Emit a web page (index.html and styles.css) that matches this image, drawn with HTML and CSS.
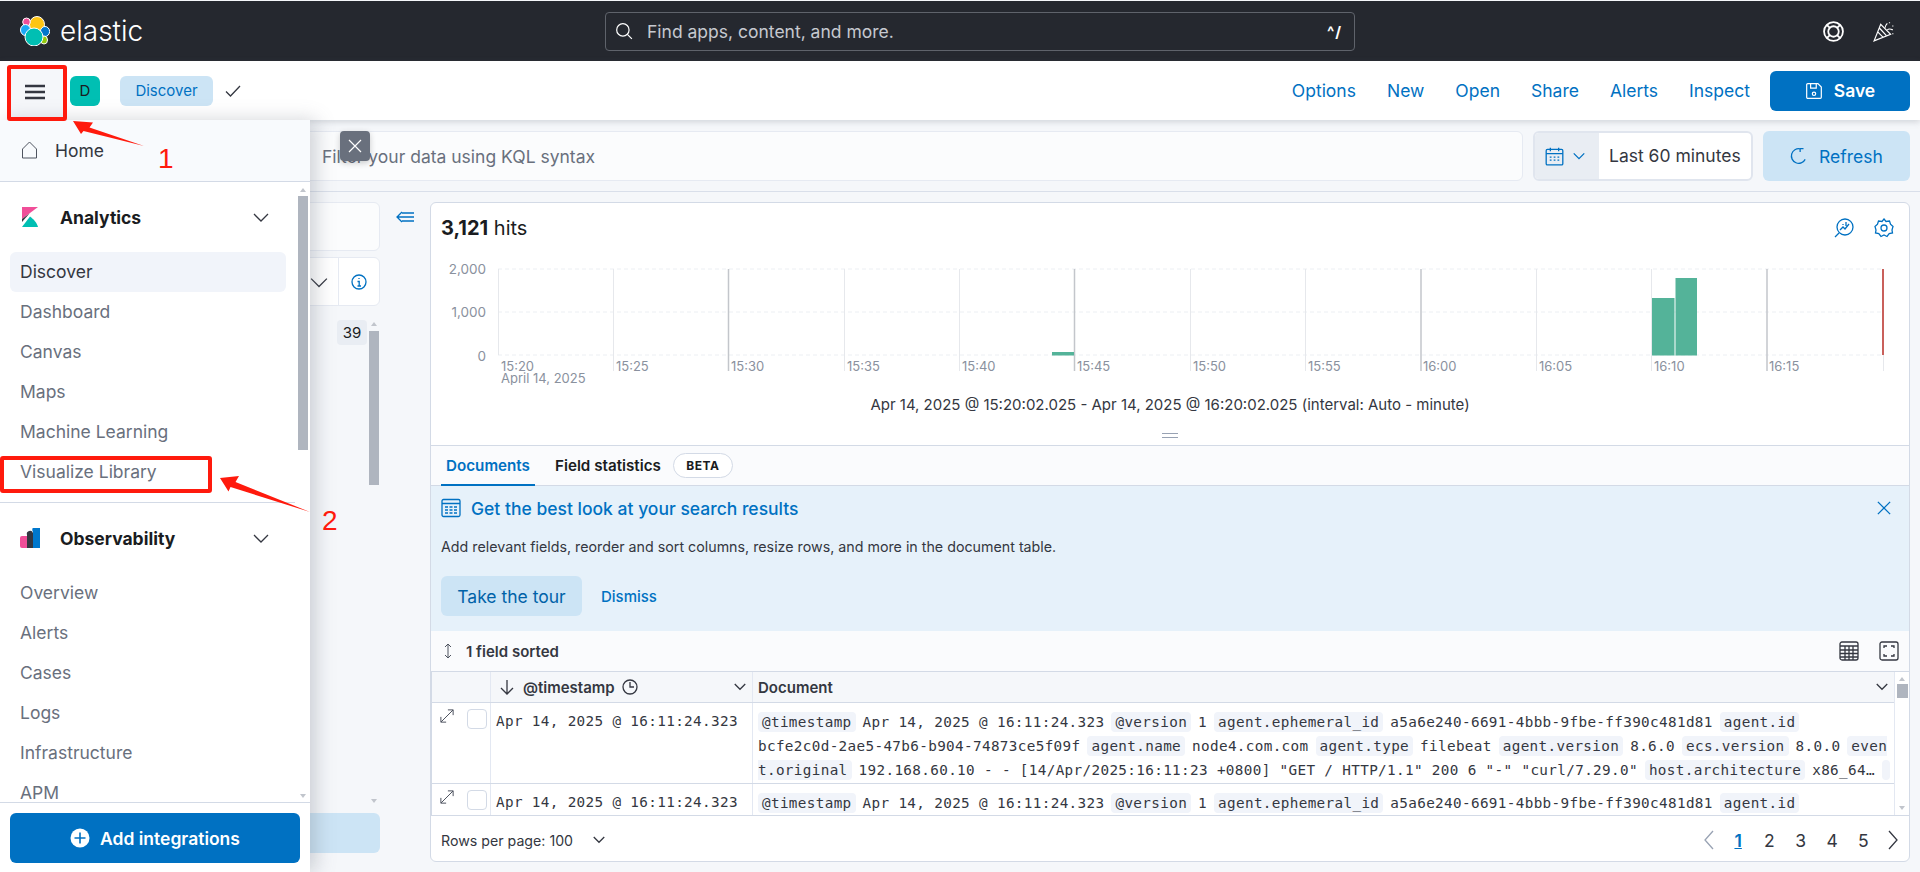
FILE: index.html
```html
<!DOCTYPE html>
<html lang="en">
<head>
<meta charset="utf-8">
<title>Discover - Elastic</title>
<link rel="stylesheet" href="styles.css">
</head>
<body>
<header class="topbar">
  <div class="brand">
    <svg class="brand-logo" viewBox="0 0 30 30" width="30" height="30">
      <ellipse cx="17" cy="8.5" rx="7.5" ry="8" fill="#fec514" stroke="#fff" stroke-width="1"/>
      <ellipse cx="6.5" cy="6" rx="3.8" ry="4" fill="#f04e98" stroke="#fff" stroke-width="1"/>
      <ellipse cx="5.5" cy="14" rx="5" ry="5.5" fill="#1ba9f5" stroke="#fff" stroke-width="1"/>
      <ellipse cx="25" cy="15.5" rx="4.6" ry="5" fill="#0077cc" stroke="#fff" stroke-width="1"/>
      <ellipse cx="24" cy="24" rx="3.5" ry="4" fill="#93c90e" stroke="#fff" stroke-width="1"/>
      <ellipse cx="14" cy="21" rx="9" ry="9" fill="#00bfb3" stroke="#fff" stroke-width="1"/>
    </svg>
    <span class="brand-name">elastic</span>
  </div>
  <div class="global-search">
    <svg class="ico-white" viewBox="0 0 16 16" width="18" height="18"><circle cx="7" cy="7" r="5.5"/><path d="M11 11l4 4"/></svg>
    <span class="global-search-text">Find apps, content, and more.</span>
    <span class="global-search-key">^/</span>
  </div>
  <div class="top-icons">
    <svg class="ico-white-bold" viewBox="0 0 20 20" width="21" height="21"><circle cx="10" cy="10" r="9"/><circle cx="10" cy="10" r="5"/><path d="M3.600 3.600l3 3M16.400 3.600l-3 3M3.600 16.400l3-3M16.400 16.400l-3-3"/></svg>
    <svg class="ico-white" viewBox="0 0 20 20" width="22" height="22"><path d="M1 19L7 4l9 9zM4.500 11l5 5M6 7.500l6 6.500"/><path d="M11 7c0-2 1-3 2-4M13 9c1-1 3-1 5 0M15 2v1M18 5v1M18 12v1"/></svg>
  </div>
</header>

<div class="appbar">
  <div class="menu-btn">
    <svg class="ico-dark-thick" viewBox="0 0 20 16" width="20" height="16"><path d="M0 2h20M0 8h20M0 14h20"/></svg>
  </div>
  <div class="avatar">D</div>
  <div class="crumb">Discover</div>
  <svg class="ico-dark" viewBox="0 0 16 16" width="16" height="16"><path d="M1 8.500l4.500 4.500L15 3"/></svg>
  <nav class="app-actions">
    <span class="app-link">Options</span>
    <span class="app-link">New</span>
    <span class="app-link">Open</span>
    <span class="app-link">Share</span>
    <span class="app-link">Alerts</span>
    <span class="app-link">Inspect</span>
    <span class="save-btn">
      <svg class="ico-white" viewBox="0 0 16 16" width="18" height="20"><path d="M1.500 2.500a1 1 0 0 1 1-1h9l3 3v9a1 1 0 0 1-1 1h-11a1 1 0 0 1-1-1zM5 1.500v4h5v-4"/><circle cx="8" cy="10.500" r="1.500"/></svg>
      Save
    </span>
  </nav>
</div>

<main class="workspace">
  <div class="query-row">
    <div class="query-input">Filter your data using KQL syntax</div>
    <div class="date-picker">
      <div class="date-prepend">
        <svg class="ico-blue" viewBox="0 0 16 16" width="19" height="20"><rect x="1" y="2.500" width="14" height="13" rx="1"/><path d="M1 6h14M4.500 1v3M11.500 1v3M4 9h1.500M7.300 9h1.500M10.500 9H12M4 11.500h1.500M7.300 11.500h1.500M10.500 11.500H12"/></svg>
        <svg class="ico-blue" viewBox="0 0 16 16" width="14" height="14"><path d="M2 5l6 6 6-6"/></svg>
      </div>
      <div class="date-value">Last 60 minutes</div>
    </div>
    <div class="refresh-btn">
      <svg class="ico-blue" viewBox="0 0 16 16" width="18" height="18"><path d="M13.500 11A6.500 6.500 0 1 1 9 1.600M9 1v3.500M9 1.500h3"/></svg>
      Refresh
    </div>
  </div>

  <div class="discover">
    <aside class="fields">
      <div class="fields-box fields-search"></div>
      <div class="fields-box fields-filter">
        <div class="fields-filter-main">
          <svg class="ico-dark" viewBox="0 0 16 16" width="18" height="18"><path d="M1 5l7 7 7-7"/></svg>
        </div>
        <div class="fields-filter-info">
          <svg class="ico-blue" viewBox="0 0 16 16" width="16" height="16"><circle cx="8" cy="8" r="7"/><path d="M6.500 7.500H8.200V12M6.500 12h3.500M8 4v1"/></svg>
        </div>
      </div>
      <div class="fields-list">
        <span class="count-badge">39</span>
        <div class="v-scroll">
          <span class="scroll-arrow-up"></span>
          <span class="v-scroll-thumb"></span>
          <span class="scroll-arrow-down"></span>
        </div>
      </div>
      <div class="fields-add"></div>
    </aside>

    <div class="collapse-col">
      <svg class="ico-blue" viewBox="0 0 18 14" width="18" height="14"><path d="M6 1L1 6l5 5M1 6h17M6 2h12M6 10h12" /></svg>
    </div>

    <section class="panel">
      <div class="hits-row">
        <div class="hits"><b>3,121</b> hits</div>
        <div class="hits-tools">
          <svg class="ico-blue" viewBox="0 0 20 20" width="20" height="20"><circle cx="11" cy="9" r="8"/><path d="M5 15l-4 4M6 12l3-3 2 2 4-5M9 6v1M12 4v4"/></svg>
          <svg class="ico-blue" viewBox="0 0 20 20" width="20" height="20"><path d="M10 1l2 2.500 3.500-.5 1 3.200L19 8.500 18 12l.5 3-3.300.5-2.200 3-3-1.500-3 1.500-2.200-3L1.500 15 2 12 1 8.500l2.500-2.300 1-3.200 3.500.5z"/><circle cx="10" cy="10" r="3"/></svg>
        </div>
      </div>
      <svg class="chart" viewBox="431 255 1478 130" width="1478" height="130">
        <g class="grid-h">
          <path d="M498 269H1883M498 312H1883M498 355H1883"/>
        </g>
        <g class="grid-v">
          <path d="M498.500 269V355M613.500 269V371M844.500 269V371M959.500 269V371M1190.500 269V371M1305.500 269V371M1536.500 269V371M1651.500 269V371M1883.500 355V371"/>
        </g>
        <g class="grid-v-major">
          <path d="M728.500 269V371M1074.500 269V371M1421 269V371M1767 269V371"/>
        </g>
        <g class="bars">
          <rect x="1052" y="352" width="22" height="3.500"/>
          <rect x="1652" y="298" width="22.500" height="57.500"/>
          <rect x="1675.500" y="278" width="21.500" height="77.500"/>
        </g>
        <path class="now-line" d="M1883 269V355"/>
        <g class="y-labels">
          <text x="486" y="273.500">2,000</text>
          <text x="486" y="317">1,000</text>
          <text x="486" y="361">0</text>
        </g>
        <g class="x-labels">
          <text x="501" y="370.500"><tspan>15:20</tspan><tspan x="501" dy="12">April 14, 2025</tspan></text>
          <text x="616" y="370.500">15:25</text>
          <text x="731" y="370.500">15:30</text>
          <text x="847" y="370.500">15:35</text>
          <text x="962" y="370.500">15:40</text>
          <text x="1077" y="370.500">15:45</text>
          <text x="1193" y="370.500">15:50</text>
          <text x="1308" y="370.500">15:55</text>
          <text x="1423" y="370.500">16:00</text>
          <text x="1539" y="370.500">16:05</text>
          <text x="1654" y="370.500">16:10</text>
          <text x="1769" y="370.500">16:15</text>
        </g>
      </svg>
      <div class="interval">Apr 14, 2025 @ 15:20:02.025 - Apr 14, 2025 @ 16:20:02.025 (interval: Auto - minute)</div>
      <div class="drag-handle"><span class="drag-lines"></span></div>

      <div class="tabs">
        <span class="tab tab-active">Documents</span>
        <span class="tab">Field statistics</span>
        <span class="beta">BETA</span>
      </div>

      <div class="callout">
        <div class="callout-title">
          <svg class="ico-blue" viewBox="0 0 20 20" width="20" height="20"><rect x="1" y="1.500" width="18" height="17" rx="1.500"/><path d="M1 5.500h18M4 9h3M8.500 9h3M13 9h3M4 12h3M8.500 12h3M13 12h3M4 15h3M8.500 15h3M13 15h3"/></svg>
          <span class="callout-heading">Get the best look at your search results</span>
          <svg class="callout-close ico-blue" viewBox="0 0 16 16" width="14" height="14"><path d="M1 1l14 14M15 1L1 15"/></svg>
        </div>
        <p class="callout-text">Add relevant fields, reorder and sort columns, resize rows, and more in the document table.</p>
        <div class="callout-actions">
          <span class="tour-btn">Take the tour</span>
          <span class="dismiss">Dismiss</span>
        </div>
      </div>

      <div class="grid-toolbar">
        <svg class="ico-thin" viewBox="0 0 16 16" width="16" height="16"><path d="M8 1v14M5 4l3-3 3 3M5 12l3 3 3-3"/></svg>
        <span class="sorted">1 field sorted</span>
        <div class="grid-toolbar-right">
          <svg class="ico-dark" viewBox="0 0 20 20" width="20" height="20"><rect x="1" y="1" width="18" height="18" rx="2"/><path d="M1 5h18M1 9h18M1 12.500h18M1 16h18M6 5v14M10 5v14M14 5v14"/></svg>
          <svg class="ico-dark" viewBox="0 0 20 20" width="20" height="20"><rect x="1" y="1" width="18" height="18" rx="2"/><path d="M5 7V5h3M12 5h3v2M15 13v2h-3M8 15H5v-2"/></svg>
        </div>
      </div>

      <div class="data-grid">
        <div class="grid-body">
          <div class="grid-row grid-head">
            <div class="cell cell-ctl"></div>
            <div class="cell cell-time head-time">
              <svg class="ico-dark" viewBox="0 0 16 16" width="16" height="16"><path d="M8 1v14M2 9l6 6 6-6"/></svg>
              <b>@timestamp</b>
              <svg class="ico-dark" viewBox="0 0 16 16" width="16" height="16"><circle cx="8" cy="8" r="7"/><path d="M8 3v5h4"/></svg>
              <svg class="ico-dark head-chevron" viewBox="0 0 16 16" width="12" height="12"><path d="M1 4l7 7 7-7"/></svg>
            </div>
            <div class="cell cell-doc head-doc"><b>Document</b>
              <svg class="ico-dark head-chevron" viewBox="0 0 16 16" width="12" height="12"><path d="M1 4l7 7 7-7"/></svg>
            </div>
          </div>

          <div class="grid-row row-tall">
            <div class="cell cell-ctl">
              <svg class="ico-thin" viewBox="0 0 16 16" width="14" height="14"><path d="M1 15L15 1M9 1h6v6M1 9v6h6"/></svg>
              <span class="checkbox"></span>
            </div>
            <div class="cell cell-time mono">Apr 14, 2025 @ 16:11:24.323</div>
            <div class="cell cell-doc mono">
              <div class="doc-line"><span class="pill">@timestamp</span><span>Apr 14, 2025 @ 16:11:24.323</span><span class="pill">@version</span><span>1</span><span class="pill">agent.ephemeral_id</span><span>a5a6e240-6691-4bbb-9fbe-ff390c481d81</span><span class="pill">agent.id</span></div>
              <div class="doc-line"><span>bcfe2c0d-2ae5-47b6-b904-74873ce5f09f</span><span class="pill">agent.name</span><span>node4.com.com</span><span class="pill">agent.type</span><span>filebeat</span><span class="pill">agent.version</span><span>8.6.0</span><span class="pill">ecs.version</span><span>8.0.0</span><span class="pill pill-cut-r">even</span></div>
              <div class="doc-line"><span class="pill pill-cut-l">t.original</span><span>192.168.60.10 - - [14/Apr/2025:16:11:23 +0800] "GET / HTTP/1.1" 200 6 "-" "curl/7.29.0"</span><span class="pill">host.architecture</span><span>x86_64…</span><span class="pill pill-empty"></span></div>
            </div>
          </div>

          <div class="grid-row row-short">
            <div class="cell cell-ctl">
              <svg class="ico-thin" viewBox="0 0 16 16" width="14" height="14"><path d="M1 15L15 1M9 1h6v6M1 9v6h6"/></svg>
              <span class="checkbox"></span>
            </div>
            <div class="cell cell-time mono">Apr 14, 2025 @ 16:11:24.323</div>
            <div class="cell cell-doc mono">
              <div class="doc-line"><span class="pill">@timestamp</span><span>Apr 14, 2025 @ 16:11:24.323</span><span class="pill">@version</span><span>1</span><span class="pill">agent.ephemeral_id</span><span>a5a6e240-6691-4bbb-9fbe-ff390c481d81</span><span class="pill">agent.id</span></div>
            </div>
          </div>
        </div>
        <div class="grid-scroll">
          <span class="scroll-arrow-up"></span>
          <span class="grid-scroll-thumb"></span>
          <span class="scroll-arrow-down"></span>
        </div>
      </div>

      <div class="pager">
        <span class="rows-per">Rows per page: 100</span>
        <svg class="ico-dark" viewBox="0 0 16 16" width="12" height="12"><path d="M1 4l7 7 7-7"/></svg>
        <div class="pages">
          <svg class="ico-muted" viewBox="0 0 10 20" width="10" height="20"><path d="M9 1L1 10l8 9"/></svg>
          <span class="page page-current">1</span>
          <span class="page">2</span>
          <span class="page">3</span>
          <span class="page">4</span>
          <span class="page">5</span>
          <svg class="ico-dark" viewBox="0 0 10 20" width="10" height="20"><path d="M1 1l8 9-8 9"/></svg>
        </div>
      </div>
    </section>
  </div>
</main>

<span class="query-close">
  <svg class="ico-white" viewBox="0 0 16 16" width="16" height="16"><path d="M2 2l12 12M14 2L2 14"/></svg>
</span>

<aside class="flyout">
  <div class="fly-home">
    <svg class="ico-thin" viewBox="0 0 16 18" width="17" height="18"><path d="M1 8l7-7 7 7v9H1z"/></svg>
    <span>Home</span>
  </div>
  <div class="fly-scroll">
    <section class="fly-group">
      <div class="fly-group-head">
        <svg viewBox="0 0 16 20" width="16" height="20"><path fill="#f04e98" d="M0 0h16L0 12z"/><path fill="#343741" d="M0 12L7.500 6.500 0 15z"/><path fill="#00bfb3" d="M0 20L8 9.500C11.500 12 15 16 16 20z"/></svg>
        <span class="fly-group-title">Analytics</span>
        <svg class="ico-dark fly-chevron" viewBox="0 0 16 16" width="16" height="16"><path d="M1 5l7 7 7-7"/></svg>
      </div>
      <ul class="fly-list">
        <li class="fly-item fly-item-active">Discover</li>
        <li class="fly-item">Dashboard</li>
        <li class="fly-item">Canvas</li>
        <li class="fly-item">Maps</li>
        <li class="fly-item">Machine Learning</li>
        <li class="fly-item">Visualize Library</li>
      </ul>
    </section>
    <section class="fly-group fly-group-next">
      <div class="fly-group-head">
        <svg viewBox="0 0 20 20" width="20" height="20"><path fill="#f04e98" d="M0 10a2 2 0 0 1 2-2h5v12H2a2 2 0 0 1-2-2z"/><path fill="#343741" d="M7 7a3 3 0 0 1 6-2v15H7z"/><path fill="#0077cc" d="M13 4a4 4 0 0 1 7-4v20h-7z"/></svg>
        <span class="fly-group-title">Observability</span>
        <svg class="ico-dark fly-chevron" viewBox="0 0 16 16" width="16" height="16"><path d="M1 5l7 7 7-7"/></svg>
      </div>
      <ul class="fly-list">
        <li class="fly-item">Overview</li>
        <li class="fly-item">Alerts</li>
        <li class="fly-item">Cases</li>
        <li class="fly-item">Logs</li>
        <li class="fly-item">Infrastructure</li>
        <li class="fly-item">APM</li>
      </ul>
    </section>
    <div class="fly-scrollbar">
      <span class="scroll-arrow-up"></span>
      <span class="fly-scrollbar-thumb"></span>
      <span class="scroll-arrow-down"></span>
    </div>
  </div>
  <div class="fly-foot">
    <div class="add-btn">
      <svg viewBox="0 0 20 20" width="20" height="20"><circle cx="10" cy="10" r="9.500" fill="#fff"/><path d="M10 4.500v11M4.500 10h11" stroke="#0071c2" stroke-width="1.600"/></svg>
      Add integrations
    </div>
  </div>
</aside>

<div class="mark-box mark-menu"></div>
<div class="mark-box mark-library"></div>
<svg class="mark-arrows" viewBox="0 0 1920 872" width="1920" height="872">
  <path d="M73 121L93 122.500 89.500 127.500 144 146 83.500 131 81 134z"/>
  <path d="M220 478L239 476 235.500 482 310 512 230.500 487 228.500 491.500z"/>
</svg>
<span class="mark-num mark-num-1">1</span>
<span class="mark-num mark-num-2">2</span>
</body>
</html>
```
FILE: styles.css
```css
* { box-sizing: border-box; }
html, body { margin: 0; padding: 0; }
body {
  position: relative;
  width: 1920px;
  height: 872px;
  overflow: hidden;
  background: #f5f7fa;
  font-family: Inter, "Liberation Sans", sans-serif;
  font-size: 17.5px;
  color: #343741;
  display: flex;
  flex-direction: column;
}
svg { display: block; flex: none; fill: none; }
.ico-white *, .ico-white-bold *, .ico-dark *, .ico-thin *, .ico-dark-thick *, .ico-blue *, .ico-muted * { vector-effect: non-scaling-stroke; }
.ico-white { stroke: #fff; stroke-width: 1.2; }
.ico-white-bold { stroke: #fff; stroke-width: 1.800; }
.ico-dark { stroke: #343741; stroke-width: 1.300; }
.ico-thin { stroke: #4f5460; stroke-width: 1; }
.ico-dark-thick { stroke: #343741; stroke-width: 2.600; }
.ico-blue { stroke: #0071c2; stroke-width: 1.300; }
.ico-muted { stroke: #98a2b3; stroke-width: 1.300; }

/* top bar */
.topbar {
  height: 60px;
  margin-top: 1px;
  flex: none;
  background: #25282f;
  display: flex;
  align-items: center;
  padding: 0 25px 0 20px;
}
.brand { width: 585px; display: flex; align-items: center; gap: 10px; }
.brand-name { color: #fff; font-size: 28px; font-weight: 300; line-height: 1; }
.global-search {
  width: 750px;
  height: 39px;
  border: 1px solid #5f636b;
  border-radius: 4px;
  display: flex;
  align-items: center;
  padding: 0 12px 0 9px;
  color: #c6c9d0;
}
.global-search-text { margin-left: 14px; flex: 1; font-size: 17.5px; }
.global-search-key { color: #fff; font-size: 15px; font-weight: 700; letter-spacing: 1px; }
.top-icons { margin-left: auto; display: flex; gap: 29px; align-items: center; }

/* app bar */
.appbar {
  height: 59px;
  flex: none;
  background: #fff;
  display: flex;
  align-items: center;
  padding: 0 10px 0 7px;
  box-shadow: 0 2px 6px rgba(105, 112, 125, .25);
  position: relative;
  z-index: 2;
}
.menu-btn {
  width: 59px;
  height: 54px;
  margin-top: 5px;
  padding: 0 3px 2px 0;
  background: #f5f7fa;
  display: flex;
  align-items: center;
  justify-content: center;
}
.avatar {
  width: 30px;
  height: 30px;
  margin: 0 20px 0 4px;
  border-radius: 6px;
  background: #00bfb3;
  color: #1a1c21;
  font-size: 15px;
  display: flex;
  align-items: center;
  justify-content: center;
}
.crumb {
  width: 93px;
  height: 30px;
  margin-right: 12px;
  border-radius: 6px;
  background: #cce4f5;
  color: #0071c2;
  font-size: 15px;
  display: flex;
  align-items: center;
  justify-content: center;
}
.app-actions { margin-left: auto; display: flex; align-items: center; gap: 31px; }
.app-link { color: #0071c2; font-size: 17.5px; }
.save-btn {
  width: 140px;
  height: 40px;
  margin-left: -11px;
  border-radius: 6px;
  background: #0071c2;
  color: #fff;
  font-weight: 600;
  display: flex;
  align-items: center;
  justify-content: center;
  gap: 11px;
}

/* workspace */
.workspace { flex: 1; display: flex; flex-direction: column; min-height: 0; }
.query-row {
  height: 72px;
  flex: none;
  padding: 11px 10px 10px;
  border-bottom: 1px solid #d9dfea;
  display: flex;
  gap: 10px;
}
.query-input {
  flex: 1;
  height: 50px;
  border: 1px solid #e6eaf2;
  border-radius: 6px;
  background: #fbfcfd;
  color: #69707d;
  display: flex;
  align-items: center;
  padding-left: 311px;
  font-size: 17.5px;
}
.date-picker {
  width: 220px;
  height: 50px;
  border: 2px solid #e0e5ee;
  border-radius: 6px;
  background: #fff;
  display: flex;
  overflow: hidden;
}
.date-prepend {
  width: 64px;
  background: #e9edf3;
  display: flex;
  align-items: center;
  gap: 8px;
  padding-left: 10px;
}
.date-value { flex: 1; display: flex; align-items: center; padding: 0 0 2px 10px; white-space: nowrap; color: #343741; }
.refresh-btn {
  width: 147px;
  height: 50px;
  border-radius: 6px;
  background: #cce4f5;
  color: #0071c2;
  display: flex;
  align-items: center;
  justify-content: center;
  gap: 11px;
}

.discover { flex: 1; display: flex; padding: 10px; min-height: 0; }
.fields { width: 370px; flex: none; display: flex; flex-direction: column; }
.fields-box { background: #fbfcfd; border: 1px solid #e6eaf2; border-radius: 6px; flex: none; }
.fields-search { height: 49px; }
.fields-filter { height: 49px; margin-top: 6px; display: flex; background: #fff; }
.fields-filter-main { flex: 1; display: flex; align-items: center; justify-content: flex-end; padding-right: 10px; border-right: 1px solid #e6eaf2; }
.fields-filter-info { width: 40px; display: flex; align-items: center; justify-content: center; }
.fields-list { flex: 1; min-height: 0; display: flex; justify-content: flex-end; padding: 14px 1px 6px 0; gap: 2px; }
.count-badge {
  width: 30px;
  height: 25px;
  border-radius: 4px;
  background: #e9edf3;
  color: #1a1c21;
  font-size: 15px;
  display: flex;
  align-items: center;
  justify-content: center;
}
.v-scroll { width: 10px; display: flex; flex-direction: column; align-items: center; }
.v-scroll-thumb { display: block; width: 10px; height: 154px; margin-top: 5px; background: #afb5bf; }
.scroll-arrow-up, .scroll-arrow-down {
  display: block;
  width: 0;
  height: 0;
  border-left: 3.500px solid transparent;
  border-right: 3.500px solid transparent;
  flex: none;
}
.scroll-arrow-up { border-bottom: 4px solid #c1c5cc; margin-top: 2px; }
.scroll-arrow-down { border-top: 4px solid #c1c5cc; margin-top: auto; }
.fields-add { height: 40px; flex: none; margin: 4px 0 9px; border-radius: 6px; background: #cce4f5; }

.collapse-col { width: 50px; flex: none; display: flex; justify-content: center; padding-top: 9px; }

/* panel */
.panel {
  flex: 1;
  min-width: 0;
  background: #fff;
  border: 1px solid #d3dae6;
  border-radius: 6px;
  display: flex;
  flex-direction: column;
  overflow: hidden;
}
.hits-row { height: 52px; flex: none; display: flex; align-items: center; padding: 0 15px 2px 10px; }
.hits { font-size: 20px; color: #1a1c21; }
.hits b { font-weight: 700; }
.hits-tools { margin-left: auto; display: flex; gap: 20px; }
.chart { flex: none; }
.grid-h path { stroke: #eceff3; stroke-width: 1; stroke-dasharray: 4 3; }
.grid-v path { stroke: #e6e8ec; stroke-width: 1; }
.grid-v-major path { stroke: #c3c6cb; stroke-width: 1.500; }
.bars rect { fill: #54b399; }
.now-line { stroke: #c9605b; stroke-width: 2; }
.y-labels text { font-size: 13.500px; fill: #8a919e; text-anchor: end; font-family: Inter, sans-serif; }
.x-labels text { font-size: 13px; fill: #8a919e; font-family: Inter, sans-serif; }
.interval {
  height: 38px;
  flex: none;
  display: flex;
  align-items: center;
  justify-content: center;
  font-size: 15px;
  color: #343741;
}
.drag-handle { height: 22px; flex: none; display: flex; align-items: flex-start; justify-content: center; padding-top: 10px; }
.drag-lines { display: block; width: 16px; height: 5px; border-top: 1.500px solid #98a2b3; border-bottom: 1.500px solid #98a2b3; }

.tabs {
  height: 41px;
  flex: none;
  border-top: 1px solid #d3dae6;
  border-bottom: 1px solid #d3dae6;
  background: #fafbfd;
  display: flex;
  align-items: center;
  padding-left: 10px;
}
.tab { height: 40px; display: flex; align-items: center; font-size: 15.200px; font-weight: 600; color: #1a1c21; padding: 0 5px; }
.tab-active { color: #0071c2; border-bottom: 2px solid #0071c2; padding: 2px 5px 0; width: 94px; justify-content: center; margin-right: 15px; }
.beta {
  width: 60px;
  height: 25px;
  margin-left: 7px;
  border: 1px solid #d3dae6;
  border-radius: 13px;
  background: #fff;
  font-size: 12px;
  font-weight: 700;
  letter-spacing: .5px;
  color: #1a1c21;
  display: flex;
  align-items: center;
  justify-content: center;
}

.callout { height: 145px; flex: none; background: #e6f1fa; padding: 11px 10px 0; }
.callout-title { display: flex; align-items: center; height: 22px; gap: 10px; }
.callout-heading { color: #0071c2; font-size: 17.500px; font-weight: 500; }
.callout-close { margin-left: auto; margin-right: 8px; }
.callout-text { margin: 18px 0 0; font-size: 14.250px; line-height: 20px; color: #343741; }
.callout-actions { display: flex; align-items: center; margin-top: 19px; }
.tour-btn {
  width: 141px;
  height: 40px;
  border-radius: 6px;
  background: #cce4f5;
  color: #0062a8;
  font-size: 17.500px;
  display: flex;
  align-items: center;
  justify-content: center;
}
.dismiss { margin-left: 19px; color: #0071c2; font-size: 15px; font-weight: 500; }

.grid-toolbar { height: 41px; flex: none; background: #fafbfd; display: flex; align-items: center; padding: 0 10px 0 9px; border-bottom: 1px solid #d3dae6; }
.sorted { margin-left: 10px; font-size: 15px; font-weight: 600; color: #343741; }
.grid-toolbar-right { margin-left: auto; display: flex; gap: 20px; }

.data-grid { height: 144px; flex: none; display: flex; border-bottom: 1px solid #d3dae6; border-left: 1px solid #d3dae6; }
.grid-body { flex: 1; min-width: 0; }
.grid-row { display: grid; grid-template-columns: 58px 263px 1fr; border-bottom: 1px solid #d3dae6; }
.grid-row:last-child { border-bottom: 0; }
.grid-head { height: 31px; background: #f5f7fa; }
.row-tall { height: 81px; }
.row-short { height: 31px; overflow: hidden; }
.cell { min-width: 0; overflow: hidden; }
.cell-time { border-left: 1px solid #e3e8f2; border-right: 1px solid #e3e8f2; }
.cell-ctl { display: flex; gap: 13px; padding: 6px 0 0 8px; }
.mono { font-family: "DejaVu Sans Mono", "Liberation Mono", monospace; font-size: 14.300px; letter-spacing: .35px; color: #343741; }
.cell-time.mono { padding: 8px 0 0 5px; line-height: 20px; white-space: nowrap; }
.cell-doc.mono { padding: 7px 10px 0 5px; }
.head-time, .head-doc { display: flex; align-items: center; font-size: 15px; color: #343741; }
.head-time { padding: 0 6px 0 8px; gap: 7px; }
.head-time b, .head-doc b { font-weight: 600; }
.head-time b { margin-left: 1px; }
.head-doc { padding: 0 6px 0 5px; }
.head-chevron { margin-left: auto; }
.checkbox { display: block; width: 20px; height: 20px; border: 1px solid #d3dae6; border-radius: 4px; background: #fff; }
.doc-line { height: 24px; display: flex; gap: 7px; white-space: pre; align-items: center; }
.pill { height: 20px; line-height: 20px; padding: 0 4px; border-radius: 4px; background: #f1f4fa; }
.pill-cut-r { border-radius: 4px 0 0 4px; padding-right: 0; }
.pill-cut-l { border-radius: 0 4px 4px 0; padding-left: 0; }
.pill-empty { width: 13px; }
.grid-scroll { width: 15px; flex: none; border-left: 1px solid #e3e8f2; display: flex; flex-direction: column; align-items: center; padding-bottom: 5px; padding-top: 3px; }
.grid-scroll-thumb { display: block; width: 11px; height: 14px; margin-top: 3px; background: #afb5bf; }

.pager { flex: 1; min-height: 0; display: flex; align-items: center; padding: 3px 11px 0 10px; gap: 20px; }
.rows-per { font-size: 14.200px; color: #343741; }
.pages { margin-left: auto; display: flex; align-items: center; }
.page { width: 31.300px; text-align: center; font-size: 17.500px; color: #343741; }
.page-current { color: #0071c2; font-weight: 600; text-decoration: underline; }
.pages svg:first-child { margin-right: 9px; }
.pages svg:last-child { margin-left: 9px; }

/* overlays */
.query-close {
  position: absolute;
  left: 340px;
  top: 131px;
  width: 30px;
  height: 30px;
  border-radius: 4px;
  background: #69707d;
  box-shadow: 0 2px 6px rgba(0, 0, 0, .2);
  display: flex;
  align-items: center;
  justify-content: center;
  z-index: 4;
}

.flyout {
  position: absolute;
  left: 0;
  top: 120px;
  bottom: 0;
  width: 310px;
  background: #fff;
  box-shadow: 6px 0 18px rgba(105, 112, 125, .3);
  display: flex;
  flex-direction: column;
  z-index: 3;
  color: #69707d;
}
.fly-home {
  height: 62px;
  flex: none;
  background: #f8fafd;
  border-bottom: 1px solid #d3dae6;
  display: flex;
  align-items: center;
  gap: 17px;
  padding: 0 0 1px 21px;
  color: #343741;
}
.fly-scroll { flex: 1; min-height: 0; position: relative; overflow: hidden; }
.fly-group { padding: 16px 10px 10px; }
.fly-group-next { padding-top: 15px; border-top: 1px solid #d3dae6; margin-right: 15px; padding-right: 0; }
.fly-group-head { height: 40px; display: flex; align-items: center; padding-left: 12px; }
.fly-group:first-child .fly-group-head { padding-bottom: 2px; }
.fly-group-next .fly-group-head { padding-left: 10px; }
.fly-group-title { margin-left: 22px; color: #1a1c21; font-weight: 700; font-size: 17.500px; }
.fly-group-next .fly-group-title { margin-left: 20px; }
.fly-chevron { margin-left: auto; margin-right: 31px; }
.fly-group-next .fly-chevron { margin-right: 26px; }
.fly-list { list-style: none; margin: 14px 0 0; padding: 0; }
.fly-group:first-child .fly-list { width: 276px; }
.fly-item { height: 40px; display: flex; align-items: center; padding-left: 10px; border-radius: 6px; }
.fly-group:first-child .fly-item { padding-bottom: 2px; }
.fly-item-active { background: #f1f4fa; color: #343741; }
.fly-scrollbar { position: absolute; right: 2px; top: 4px; bottom: 4px; width: 10px; display: flex; flex-direction: column; align-items: center; }
.fly-scrollbar-thumb { display: block; width: 10px; height: 254px; margin-top: 4px; background: #afb5bf; }
.fly-foot { height: 70px; flex: none; border-top: 1px solid #d3dae6; padding: 10px 10px 9px; }
.add-btn {
  height: 50px;
  border-radius: 6px;
  background: #0071c2;
  color: #fff;
  font-weight: 600;
  display: flex;
  align-items: center;
  justify-content: center;
  gap: 10px;
}

/* annotations drawn on the screenshot */
.mark-box { position: absolute; border: 4px solid #ff1a0d; border-radius: 3px; z-index: 5; }
.mark-menu { left: 7px; top: 65px; width: 60px; height: 56px; }
.mark-library { left: 0; top: 456px; width: 212px; height: 37px; }
.mark-arrows { position: absolute; left: 0; top: 0; z-index: 5; fill: #ff1a0d; pointer-events: none; }
.mark-num { position: absolute; z-index: 5; color: #ff1a0d; font-size: 28px; line-height: 28px; font-family: "Liberation Sans", sans-serif; }
.mark-num-1 { left: 158px; top: 145px; }
.mark-num-2 { left: 322px; top: 507px; }
```
